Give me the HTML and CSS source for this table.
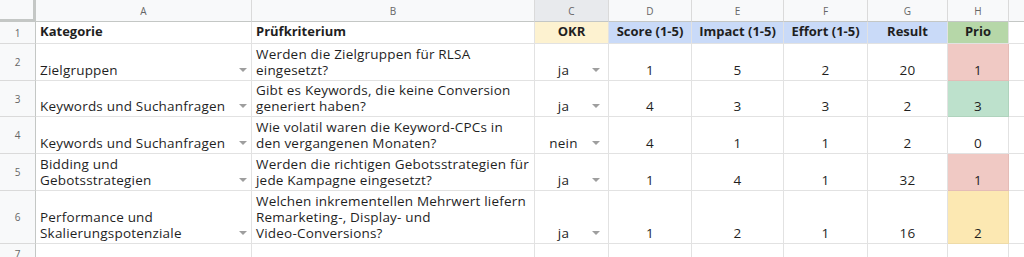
FILE: index.html
```html
<!DOCTYPE html>
<html lang="de">
<head>
<meta charset="utf-8">
<title>Prüfkriterien</title>
<link rel="stylesheet" href="styles.css">
</head>
<body>
<div class="sheet">
  <div class="corner"></div>
  <div class="colh">A</div>
  <div class="colh">B</div>
  <div class="colh sel">C</div>
  <div class="colh">D</div>
  <div class="colh">E</div>
  <div class="colh">F</div>
  <div class="colh">G</div>
  <div class="colh">H</div>
  <div class="colh rest"></div>

  <div class="rowh">1</div>
  <div class="c b">Kategorie</div>
  <div class="c b">Prüfkriterium</div>
  <div class="c b ctr yel">OKR</div>
  <div class="c b ctr blu">Score (1-5)</div>
  <div class="c b ctr blu">Impact (1-5)</div>
  <div class="c b ctr blu">Effort (1-5)</div>
  <div class="c b ctr blu">Result</div>
  <div class="c b ctr grn">Prio</div>
  <div class="c rest"></div>

  <div class="rowh">2</div>
  <div class="c dd"><span>Zielgruppen</span><i class="arr"></i></div>
  <div class="c">Werden die Zielgruppen für RLSA<br>eingesetzt?</div>
  <div class="c dd okr"><span>ja</span><i class="arr"></i></div>
  <div class="c ctr">1</div>
  <div class="c ctr">5</div>
  <div class="c ctr">2</div>
  <div class="c ctr">20</div>
  <div class="c ctr red">1</div>
  <div class="c rest"></div>

  <div class="rowh">3</div>
  <div class="c dd"><span>Keywords und Suchanfragen</span><i class="arr"></i></div>
  <div class="c">Gibt es Keywords, die keine Conversion<br>generiert haben?</div>
  <div class="c dd okr"><span>ja</span><i class="arr"></i></div>
  <div class="c ctr">4</div>
  <div class="c ctr">3</div>
  <div class="c ctr">3</div>
  <div class="c ctr">2</div>
  <div class="c ctr gr2">3</div>
  <div class="c rest"></div>

  <div class="rowh">4</div>
  <div class="c dd"><span>Keywords und Suchanfragen</span><i class="arr"></i></div>
  <div class="c">Wie volatil waren die Keyword-CPCs in<br>den vergangenen Monaten?</div>
  <div class="c dd okr"><span>nein</span><i class="arr"></i></div>
  <div class="c ctr">4</div>
  <div class="c ctr">1</div>
  <div class="c ctr">1</div>
  <div class="c ctr">2</div>
  <div class="c ctr">0</div>
  <div class="c rest"></div>

  <div class="rowh">5</div>
  <div class="c dd"><span>Bidding und<br>Gebotsstrategien</span><i class="arr"></i></div>
  <div class="c">Werden die richtigen Gebotsstrategien für<br>jede Kampagne eingesetzt?</div>
  <div class="c dd okr"><span>ja</span><i class="arr"></i></div>
  <div class="c ctr">1</div>
  <div class="c ctr">4</div>
  <div class="c ctr">1</div>
  <div class="c ctr">32</div>
  <div class="c ctr red">1</div>
  <div class="c rest"></div>

  <div class="rowh">6</div>
  <div class="c dd"><span>Performance und<br>Skalierungspotenziale</span><i class="arr"></i></div>
  <div class="c">Welchen inkrementellen Mehrwert liefern<br>Remarketing-, Display- und<br>Video-Conversions?</div>
  <div class="c dd okr"><span>ja</span><i class="arr"></i></div>
  <div class="c ctr">1</div>
  <div class="c ctr">2</div>
  <div class="c ctr">1</div>
  <div class="c ctr">16</div>
  <div class="c ctr ylw">2</div>
  <div class="c rest"></div>

  <div class="rowh r7">7</div>
  <div class="c"></div>
  <div class="c"></div>
  <div class="c"></div>
  <div class="c"></div>
  <div class="c"></div>
  <div class="c"></div>
  <div class="c"></div>
  <div class="c"></div>
  <div class="c rest"></div>
</div>
</body>
</html>
```

FILE: styles.css
```css
html, body {
  margin: 0;
  padding: 0;
  background: #ffffff;
}
body {
  font-family: "Open Sans", "Liberation Sans", sans-serif;
  font-size: 13.5px;
  color: #1f1f1f;
  overflow: hidden;
}
.sheet {
  display: grid;
  grid-template-columns: 36px 216px 283px 74px 83px 92px 84px 80px 61px 15px;
  grid-template-rows: 22px 22px 37px 36px 37px 37px 53px 20px;
  width: 1024px;
}
.sheet > div {
  box-sizing: border-box;
  border-right: 1px solid #e2e2e2;
  border-bottom: 1px solid #e2e2e2;
}
.corner {
  background: #f8f9fa;
  border-right: 3px solid #c4c7c5 !important;
  border-bottom: 3px solid #c4c7c5 !important;
}
.colh {
  background: #f8f9fa;
  color: #666;
  font-size: 10px;
  display: flex;
  align-items: center;
  justify-content: center;
  border-bottom-color: #c4c7c5 !important;
  border-right-color: #dadada !important;
}
.colh.sel {
  background: #e8eaed;
}
.colh.rest {
  border-right: none !important;
}
.rowh {
  background: #f8f9fa;
  color: #666;
  font-size: 10px;
  display: flex;
  align-items: center;
  justify-content: center;
  border-right-color: #c4c7c5 !important;
  border-bottom-color: #dadada !important;
}
.rowh.r7 {
  align-items: flex-start;
  padding-top: 3px;
}
.c {
  display: flex;
  align-items: flex-end;
  padding: 0 4px 2px 4px;
  line-height: 16px;
  letter-spacing: 0.2px;
  white-space: nowrap;
  overflow: hidden;
}
.c.rest {
  border-right: none;
}
.b {
  font-weight: 700;
  letter-spacing: 0;
  font-size: 13px;
  padding-bottom: 4px;
}
.ctr {
  justify-content: center;
}
.dd {
  justify-content: space-between;
}
.dd.okr {
  padding-left: 4px;
  padding-right: 8px;
}
.dd.okr span {
  flex: 1;
  text-align: center;
}
.arr {
  width: 0;
  height: 0;
  border-left: 4px solid transparent;
  border-right: 4px solid transparent;
  border-top: 4px solid #9e9e9e;
  margin-bottom: 6px;
  margin-left: 4px;
  flex: none;
}
.yel { background: #fdf2d0; }
.blu { background: #c9daf8; }
.grn { background: #b6d7a8; }
.red { background: #f0c9c4; border-color: #e4bcb7 !important; }
.gr2 { background: #bde1cc; border-color: #afd3bd !important; }
.ylw { background: #fce8b2; border-color: #eedba8 !important; }
```
